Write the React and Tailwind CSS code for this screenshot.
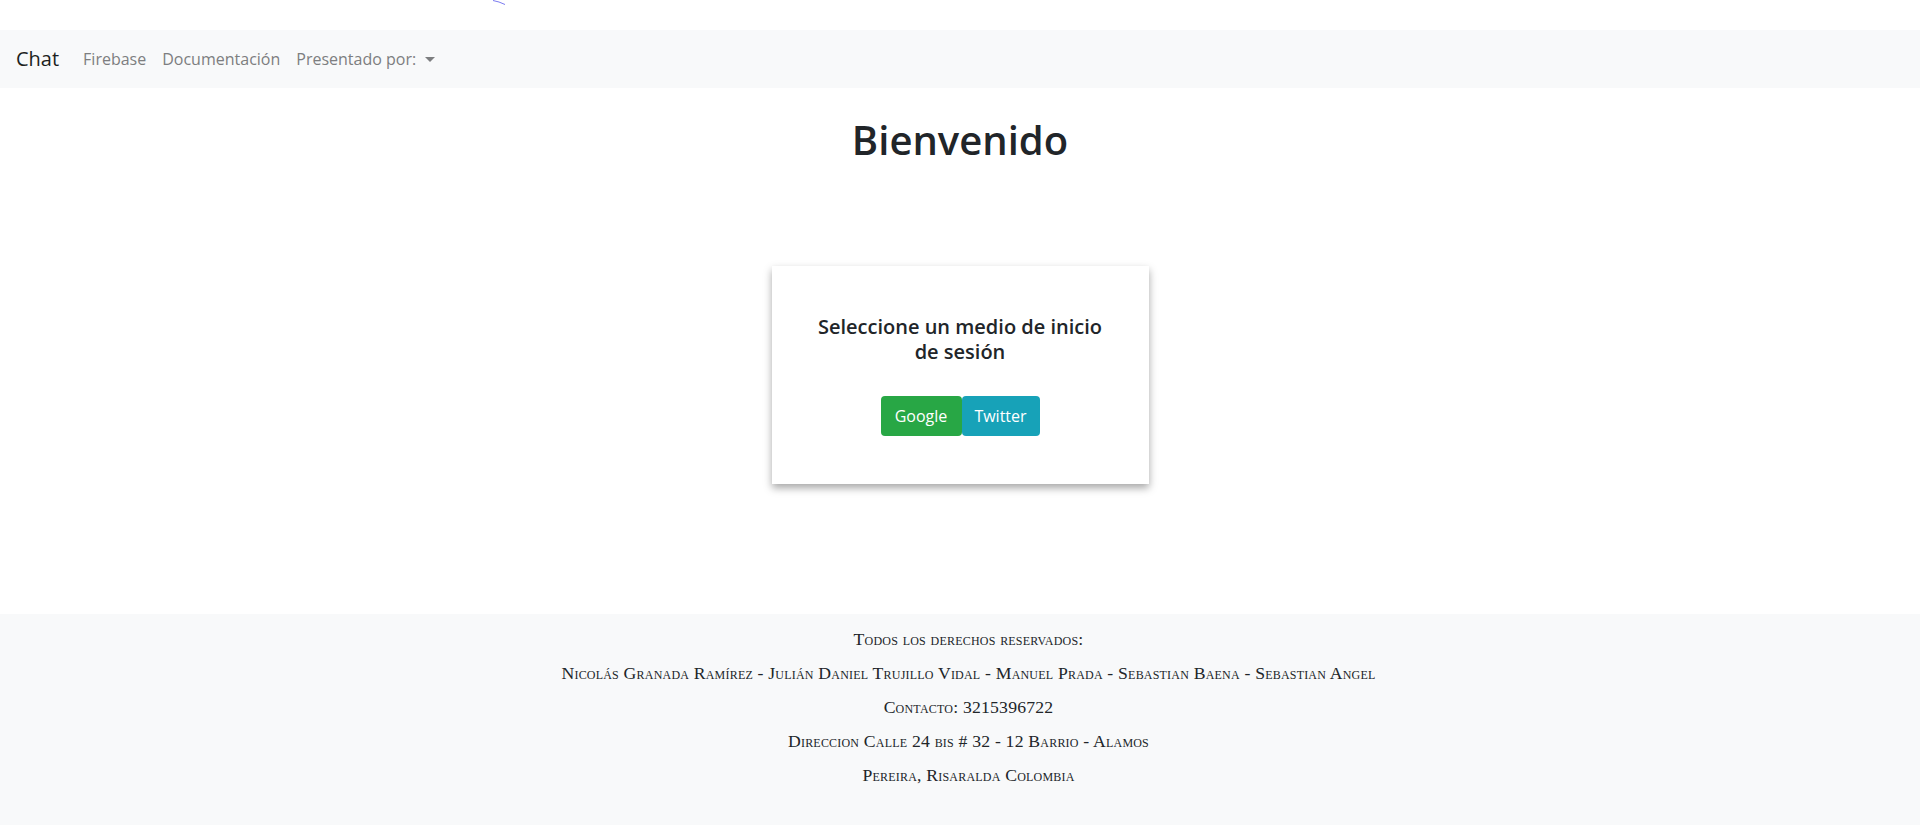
import React from 'react';

// Navbar links shown next to the brand
const navLinks = ["Firebase", "Documentación"];

// Footer lines (rendered in small caps serif)
const footerLines = [
    "Todos los derechos reservados:",
    "Nicolás Granada Ramírez - Julián Daniel Trujillo Vidal - Manuel Prada - Sebastian Baena - Sebastian Angel",
    "Contacto: 3215396722",
    "Direccion Calle 24 bis # 32 - 12 Barrio - Alamos",
    "Pereira, Risaralda Colombia",
];

function Navbar() {
    return (
        <nav className="h-[58px] bg-[#f8f9fa] flex items-center px-4">
            <a className="text-[20px] leading-[30px] text-[#1c1e21] mr-4 cursor-pointer">Chat</a>
            <ul className="flex items-center">
                {navLinks.map((link) => (
                    <li key={link}>
                        <a className="px-2 text-[16px] leading-[24px] text-[#7d7e80] cursor-pointer">{link}</a>
                    </li>
                ))}
                <li>
                    <a className="px-2 text-[16px] leading-[24px] text-[#7d7e80] cursor-pointer flex items-center">
                        Presentado por:
                        <span className="ml-[9px] w-0 h-0 border-x-[5px] border-x-transparent border-t-[5px] border-t-[#7d7e80]"></span>
                    </a>
                </li>
            </ul>
        </nav>
    );
}

function LoginCard() {
    return (
        <div className="w-[377px] h-[218px] bg-white shadow-[0_4px_8px_rgba(0,0,0,0.35)] flex flex-col items-center pt-[48px]">
            <h5 className="text-[20px] leading-[25px] font-semibold text-[#212529] text-center">
                Seleccione un medio de inicio<br />de sesión
            </h5>
            <div className="flex mt-[32px]">
                <button className="w-[81px] h-[40px] rounded bg-[#28a745] text-white text-[16px] leading-[24px]">Google</button>
                <button className="w-[78px] h-[40px] rounded bg-[#17a2b8] text-white text-[16px] leading-[24px]">Twitter</button>
            </div>
        </div>
    );
}

export default function App() {
    return (
        <div className="min-h-[825px] bg-white text-[#212529] font-['Open_Sans',sans-serif] flex flex-col">
            {/* stray stroke in the top strip */}
            <div className="h-[30px] pl-[493px]">
                <svg width="13" height="5" viewBox="0 0 13 5">
                    <path d="M0 0.5 L6 2 L12 4.5" stroke="#7b7bf0" strokeWidth="1" fill="none" />
                </svg>
            </div>

            <Navbar />

            <main className="h-[526px] flex flex-col items-center">
                <h1 className="mt-[28px] text-[40px] leading-[48px] font-semibold text-[#212529]">Bienvenido</h1>
                <div className="mt-[102px]">
                    <LoginCard />
                </div>
            </main>

            <footer className="flex-1 bg-[#f8f9fa] pt-[13px] pl-[17px] font-['Liberation_Serif',serif] [font-variant:small-caps] text-[17.7px] tracking-[0.2px] text-[#212529] text-center">
                {footerLines.map((line) => (
                    <p key={line} className="leading-[24px] mb-[10px]">{line}</p>
                ))}
            </footer>
        </div>
    );
}
